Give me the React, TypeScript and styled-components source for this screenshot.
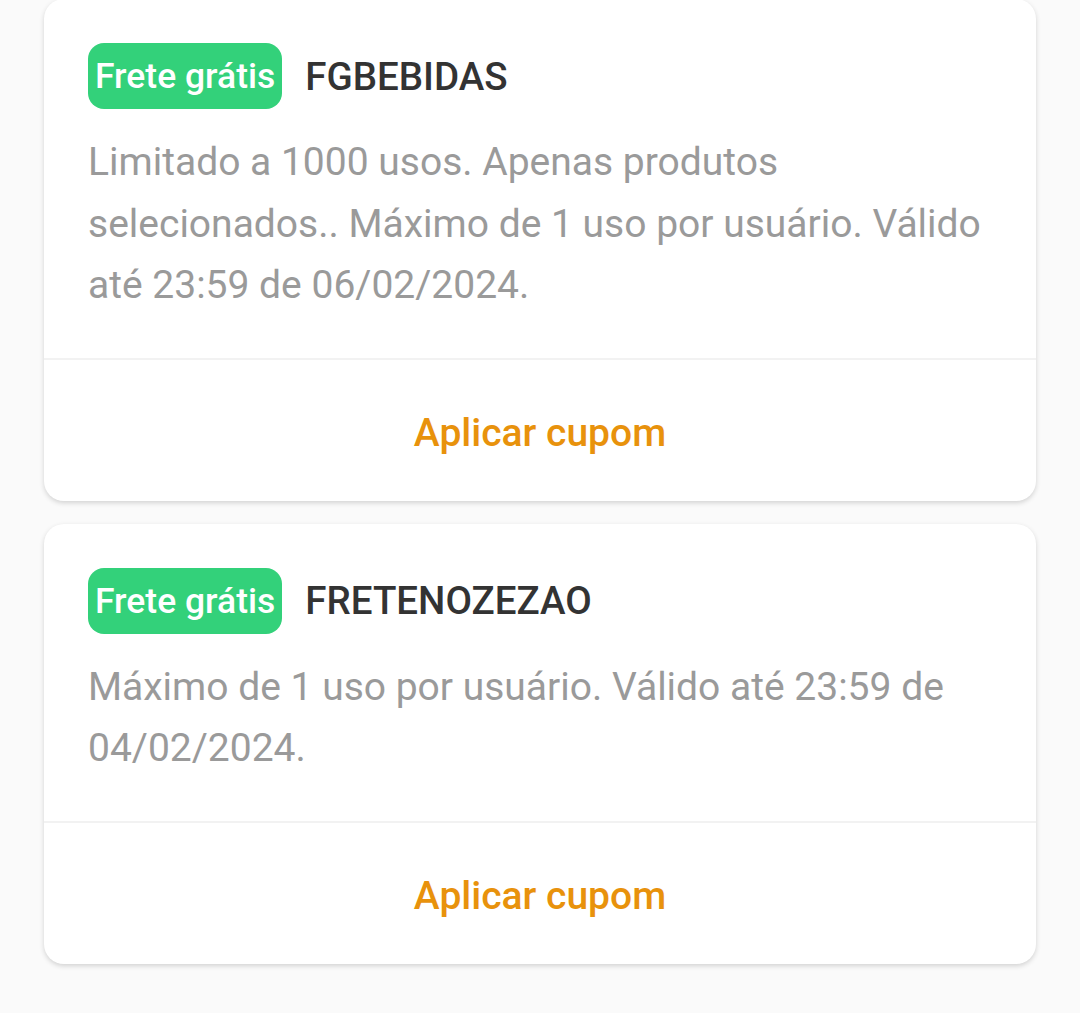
import React from "react";
import styled, { createGlobalStyle } from "styled-components";

const Global = createGlobalStyle`
  html, body { margin: 0; padding: 0; background: #fafafa; }
  body { font-family: Roboto, "Noto Sans", Arial, sans-serif; }
`;

const Page = styled.div`
  display: flex;
  flex-direction: column;
  gap: 23px;
  padding: 0 44px 40px;
  margin-top: -1px;
`;

const Card = styled.div`
  background: #fff;
  border-radius: 20px;
  box-shadow: 0 2px 5px rgba(0, 0, 0, 0.16);
  display: flex;
  flex-direction: column;
`;

const Body = styled.div`
  padding: 44px 44px 41px;
  border-bottom: 2px solid #f2f2f2;
`;

const Header = styled.div`
  display: flex;
  align-items: center;
  gap: 23px;
`;

const Badge = styled.span`
  background: #33d17a;
  color: #fff;
  font-size: 35.5px;
  font-weight: 500;
  height: 66px;
  line-height: 66px;
  padding: 0 7px;
  border-radius: 16px;
  white-space: nowrap;
`;

const Code = styled.span`
  color: #333;
  font-size: 38.5px;
  font-weight: 500;
`;

const Desc = styled.p`
  margin: 23px 0 0;
  color: #9a9a9a;
  font-size: 39px;
  line-height: 61.5px;
`;

const Action = styled.button`
  border: 0;
  background: transparent;
  height: 141px;
  font-family: inherit;
  font-size: 39px;
  font-weight: 500;
  color: #e8920c;
  padding: 6px 0 0;
  cursor: pointer;
`;

const coupons = [
  {
    code: "FGBEBIDAS",
    desc: "Limitado a 1000 usos. Apenas produtos selecionados.. Máximo de 1 uso por usuário. Válido até 23:59 de 06/02/2024.",
  },
  {
    code: "FRETENOZEZAO",
    desc: "Máximo de 1 uso por usuário. Válido até 23:59 de 04/02/2024.",
  },
];

export default function App() {
  return (
    <>
      <Global />
      <Page>
        {coupons.map((c) => (
          <Card key={c.code}>
            <Body>
              <Header>
                <Badge>Frete grátis</Badge>
                <Code>{c.code}</Code>
              </Header>
              <Desc>{c.desc}</Desc>
            </Body>
            <Action>Aplicar cupom</Action>
          </Card>
        ))}
      </Page>
    </>
  );
}
